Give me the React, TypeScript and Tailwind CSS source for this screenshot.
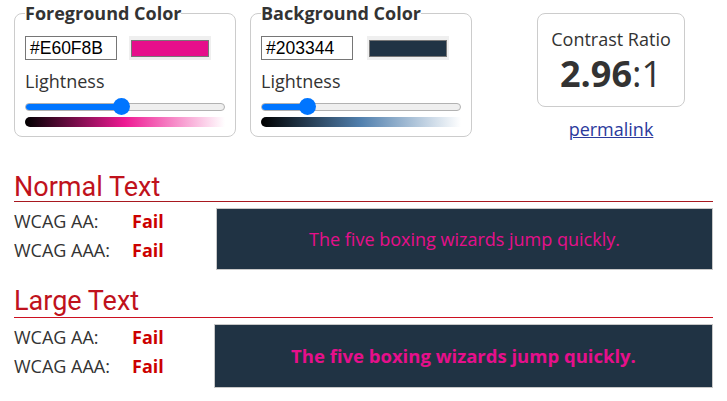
import React from 'react';

interface ColorPanelProps {
  title: string;
  hex: string;
  color: string;
  mid: string;
  thumb: number;
  swatchGap: string;
}

const ColorPanel: React.FC<ColorPanelProps> = ({ title, hex, color, mid, thumb, swatchGap }) => {
  return (
    <fieldset className="w-[222px] border border-[#cccccc] rounded-[8px] px-[10px] pb-[9px] pt-0">
      <legend className="px-0 text-[18px] leading-[22px] font-bold text-[#333]">{title}</legend>
      <div className="flex items-center mt-[12px]">
        <div className="w-[92px] h-[24px] border border-[#767676] px-[4px] flex items-center text-[17.5px] text-black font-['Liberation_Sans',Arial,sans-serif]">
          {hex}
        </div>
        <div className={`${swatchGap} w-[82px] h-[24px] bg-[#efefef] flex items-center justify-center`}>
          <div className="w-[78px] h-[17px] border border-[#777]" style={{ backgroundColor: color }} />
        </div>
      </div>
      <div className="mt-[9px] text-[18px] leading-[24px] text-[#333]">Lightness</div>
      <div className="relative mt-[5px] h-[17px] flex items-center">
        <div className="w-full h-[8px] rounded-full border border-[#b2b2b2] bg-[#efefef] overflow-hidden">
          <div className="h-full bg-[#0075ff]" style={{ width: `${thumb}px` }} />
        </div>
        <div
          className="absolute top-0 w-[17px] h-[17px] rounded-full bg-[#0075ff]"
          style={{ left: `${thumb - 8}px` }}
        />
      </div>
      <div
        className="mt-[2px] h-[10px] rounded-l-[5px]"
        style={{ background: `linear-gradient(to right, #000000, ${mid} 50%, #ffffff)` }}
      />
    </fieldset>
  );
};

interface ResultProps {
  label: string;
  bold?: boolean;
  boxClass: string;
  headClass: string;
}

const Result: React.FC<ResultProps> = ({ label, bold, boxClass, headClass }) => (
  <section>
    <h2 className={`text-[27px] leading-[27px] text-[#c0121c] font-['Roboto',sans-serif] border-b ${headClass}`}>
      {label}
    </h2>
    <div className="flex mt-[6px]">
      <div className="w-[200px] -mt-[1px] text-[18px] leading-[29px] text-[#333]">
        <div className="flex">
          <span className="w-[118px]">WCAG AA:</span>
          <span className="font-bold text-[#cc0000]">Fail</span>
        </div>
        <div className="flex">
          <span className="w-[118px]">WCAG AAA:</span>
          <span className="font-bold text-[#cc0000]">Fail</span>
        </div>
      </div>
      <div
        className={`flex-1 flex items-center justify-center bg-[#203344] border border-[#c8c8c8] text-[#e60f8b] ${boxClass} ${
          bold ? 'font-bold text-[18.5px]' : 'text-[18px]'
        }`}
      >
        The five boxing wizards jump quickly.
      </div>
    </div>
  </section>
);

export default function App() {
  return (
    <div className="w-[727px] h-[401px] bg-white px-[14px] pt-[2px] font-['Open_Sans',sans-serif] overflow-hidden">
      <div className="flex items-start">
        <ColorPanel title="Foreground Color" hex="#E60F8B" color="#e60f8b" mid="#ee1a93" thumb={96} swatchGap="ml-[12px]" />
        <div className="ml-[14px]">
          <ColorPanel title="Background Color" hex="#203344" color="#203344" mid="#5180ae" thumb={46} swatchGap="ml-[14px]" />
        </div>
        <div className="ml-[65px] mt-[11px] flex flex-col items-center">
          <div className="w-[148px] h-[94px] border border-[#cccccc] rounded-[8px] flex flex-col items-center text-[#333]">
            <div className="mt-[12px] text-[18px] leading-[26px]">Contrast Ratio</div>
            <div className="text-[36px] leading-[44px]">
              <span className="font-bold">2.96</span>:1
            </div>
          </div>
          <a href="#" className="mt-[10px] text-[18px] leading-[24px] text-[#2b3a9c] underline">
            permalink
          </a>
        </div>
      </div>
      <div className="mt-[33px]">
        <Result label="Normal Text" headClass="border-[#a8181f] pb-0" boxClass="ml-[2px] h-[62px]" />
      </div>
      <div className="mt-[18px]">
        <Result label="Large Text" bold headClass="border-[#cc1020] pb-[2px]" boxClass="h-[64px]" />
      </div>
    </div>
  );
}
